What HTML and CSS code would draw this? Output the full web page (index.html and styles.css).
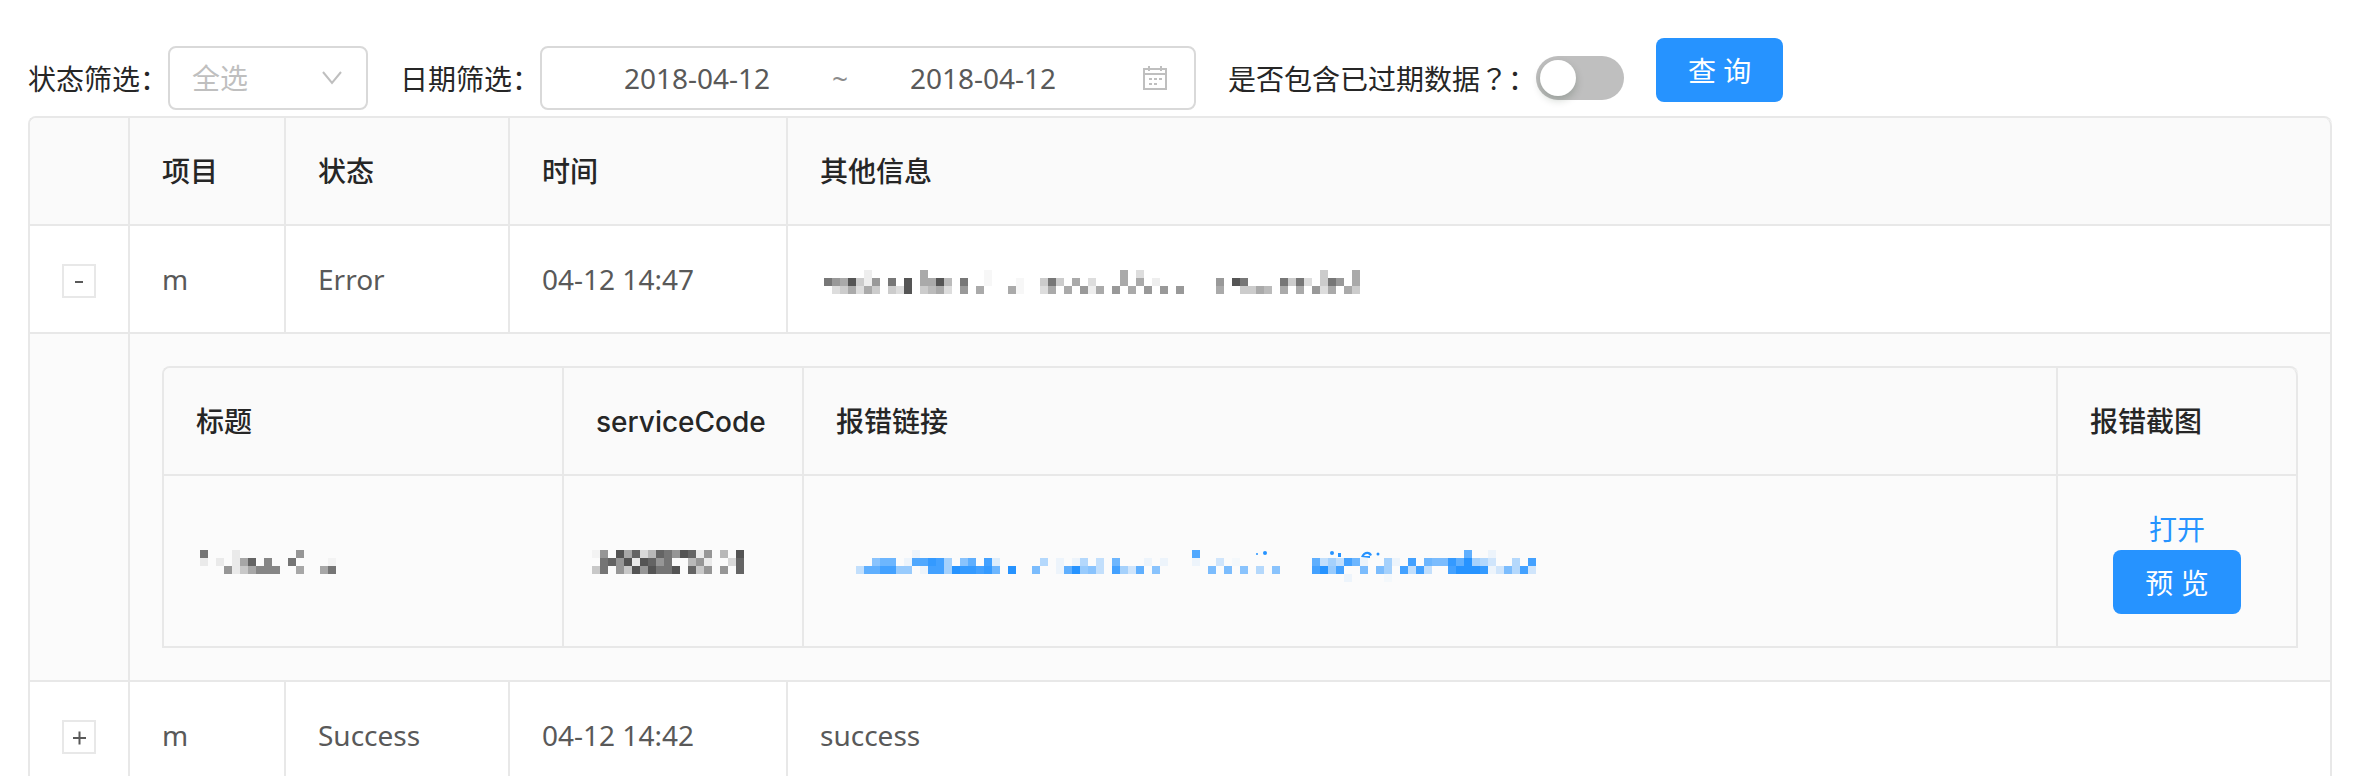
FILE: index.html
```html
<!DOCTYPE html>
<html lang="zh-CN">
<head>
<meta charset="utf-8">
<title>状态列表</title>
<link rel="stylesheet" href="styles.css">
</head>
<body>
<main class="page">
  <form class="filters">
    <div class="field">
      <label for="status">状态筛选：</label>
      <span class="select-box">
        <select id="status" class="select"><option>全选</option></select>
        <svg class="chevron" viewBox="0 0 20 14" aria-hidden="true"><path d="M1 1l9 11 9-11"/></svg>
      </span>
    </div>
    <div class="field">
      <label for="date-from">日期筛选：</label>
      <span class="range">
        <input id="date-from" class="range-input" type="text" value="2018-04-12">
        <span class="range-sep">~</span>
        <input class="range-input" type="text" value="2018-04-12" aria-label="结束日期">
        <svg class="calendar" viewBox="0 0 26 26" aria-hidden="true"><path d="M2 4h22v20H2zM2 9h22M7 1v5M19 1v5"/><path d="M7 14h3M12 14h3M17 14h3M7 19h3M12 19h3"/></svg>
      </span>
    </div>
    <div class="field">
      <label for="expired">是否包含已过期数据<span lang="zh-TW" class="centered-mark">？</span>：</label>
      <input id="expired" class="switch" type="checkbox" role="switch">
    </div>
    <button class="btn btn-query" type="button">查 询</button>
  </form>

  <table class="table">
    <colgroup><col class="c-icon"><col class="c-project"><col class="c-status"><col class="c-time"><col></colgroup>
    <thead>
      <tr><th></th><th>项目</th><th>状态</th><th>时间</th><th>其他信息</th></tr>
    </thead>
    <tbody>
      <tr>
        <td><button class="expand" type="button" aria-label="收起"><svg viewBox="0 0 30 30"><path d="M11 16h8"/></svg></button></td>
        <td>m</td><td>Error</td><td>04-12 14:47</td>
        <td><svg class="mosaic" data-x="4" data-y="12" data-rows="5:1 12:5 20:0 37:5 39:2 62:3 66:5|0:865a316 8:8 10:a 12:55a4 17:8 20:0 24:0 27:383 31:5 33:2 37:5 39:5 41:1 49:6 51:a8 57:8382 62:386 66:5|1:235253 8:32a 12:3452 17:6 19:5 23:50 27:25 30:5 32:615 36:6 38:5 40:6 42:6 44:6 49:5 52:3354 57:5 59:5 61:625 65:53"></svg></td>
      </tr>
      <tr class="detail">
        <td></td>
        <td colspan="4">
          <table class="table">
            <colgroup><col class="c-title"><col class="c-code"><col><col class="c-shot"></colgroup>
            <thead>
              <tr><th>标题</th><th>serviceCode</th><th>报错链接</th><th>报错截图</th></tr>
            </thead>
            <tbody>
              <tr>
                <td><svg class="mosaic" data-x="4" data-y="10" data-rows="0:8 4:1 12:6|0:1 2:1 4:159 8:7 11:8 16:0|3:6135777 12:5 15:58"></svg></td>
                <td><svg class="mosaic" data-x="-4" data-y="10" data-rows="0:06 3:a5924986a9 13:16 16:4 18:a|1:896a1a968 12:461 17:29|0:38 3:63a6a88a 12:936 16:6 18:9"></svg></td>
                <td><a class="report" href="#report" aria-label="报错链接"><svg class="mosaic" data-x="20" data-y="10" data-rows="7:1 42:c 76:b 79:1|2:8aa 6:1cced6 13:8b 16:d2 23:5 25:1 27:15 30:4 32:a 36:1 38:1 42:1 45:3 47:0 57:b464da1 66:61 69:d 71:a99ebf653 82:5 84:d|0:4bbdd77 8:1dd6feedea 19:f 22:9 25:1bf784 32:d63b 37:8 44:9 46:9 48:8 50:5 52:8 57:df7d 63:9 65:96 68:d4d4 74:dfffe139 82:5d3|61:1 66:0"><g transform="translate(20 10)"><circle cx="401" cy="4" r="1"/><circle cx="409" cy="3" r="2"/><circle cx="476" cy="3" r="2"/><path d="M482 3h3v4h-3z"/><circle cx="522" cy="4" r="1.500"/><path d="M505 7c2-6 9-7 11-2l-2 1c-2-3-5-2-6 0h6v2z"/></g></svg></a></td>
                <td class="actions"><a href="#open">打开</a><button class="btn" type="button">预 览</button></td>
              </tr>
            </tbody>
          </table>
        </td>
      </tr>
      <tr>
        <td><button class="expand" type="button" aria-label="展开"><svg viewBox="0 0 30 30"><path d="M9 16h13M15.500 9.500v13"/></svg></button></td>
        <td>m</td><td>Success</td><td>04-12 14:42</td><td>success</td>
      </tr>
    </tbody>
  </table>
</main>
<script src="mosaic.js"></script>
</body>
</html>
```

FILE: styles.css
```css
* { box-sizing: border-box; }

body {
  margin: 0;
  height: 100vh;
  overflow: hidden;
  background: #fff;
  color: #595959;
  font: 28px/42px "Noto Sans", "Noto Sans CJK SC", sans-serif;
}

button, input, select { font: inherit; color: inherit; margin: 0; }
a { color: #2693ff; text-decoration: none; }
svg { display: block; }

.page { padding: 38px 40px 0 28px; }

.filters {
  display: flex;
  align-items: flex-end;
  gap: 32px;
  height: 72px;
  margin-bottom: 6px;
  color: #262626;
}

.field { display: flex; align-items: center; height: 64px; white-space: nowrap; }
.field label { font-family: "Noto Sans CJK SC", sans-serif; }
.field .centered-mark { font-family: "Noto Sans CJK TC", sans-serif; }

.select-box { position: relative; }
.select {
  display: block;
  appearance: none;
  width: 200px;
  height: 64px;
  padding: 0 22px;
  border: 2px solid #d9d9d9;
  border-radius: 8px;
  background: #fff;
  color: #bfbfbf;
}
.chevron {
  position: absolute;
  right: 26px;
  top: 25px;
  width: 20px;
  height: 14px;
  fill: none;
  stroke: #bfbfbf;
  stroke-width: 2;
  pointer-events: none;
}

.range {
  display: flex;
  align-items: center;
  width: 656px;
  height: 64px;
  padding: 0 26px 0 22px;
  border: 2px solid #d9d9d9;
  border-radius: 8px;
  color: #595959;
}
.range-input {
  width: 266px;
  padding: 0;
  border: 0;
  outline: 0;
  background: none;
  text-align: center;
}
.range-sep { width: 20px; text-align: center; color: #8c8c8c; }
.calendar {
  width: 26px;
  height: 26px;
  margin-left: auto;
  fill: none;
  stroke: #bfbfbf;
  stroke-width: 2;
}

.switch {
  appearance: none;
  width: 88px;
  height: 44px;
  padding: 4px;
  border-radius: 22px;
  background: #bfbfbf;
}
.switch::before {
  content: "";
  display: block;
  width: 36px;
  height: 36px;
  border-radius: 50%;
  background: #fff;
  box-shadow: 0 4px 8px rgba(0, 35, 11, .2);
}

.btn {
  height: 64px;
  padding: 2px 32px 0;
  border: 0;
  border-radius: 8px;
  background: #2693ff;
  color: #fff;
}
.btn-query { align-self: flex-start; }

.table {
  width: 100%;
  table-layout: fixed;
  border-collapse: separate;
  border-spacing: 0;
  border: 2px solid #e8e8e8;
  border-width: 2px 0 0 2px;
  border-radius: 8px 8px 0 0;
}
.table th, .table td {
  padding: 32px;
  border: 2px solid #e8e8e8;
  border-width: 0 2px 2px 0;
  text-align: left;
  overflow-wrap: break-word;
}
.table th {
  padding: 33px 32px 31px;
  background: #fafafa;
  color: #262626;
  font-family: Inter, "Noto Sans CJK SC", sans-serif;
  font-weight: 500;
}
.table th:first-child { border-top-left-radius: 6px; }
.table th:last-child { border-top-right-radius: 8px; }

.c-icon { width: 100px; }
.c-project { width: 156px; }
.c-status { width: 224px; }
.c-time { width: 278px; }
.c-title { width: 400px; }
.c-code { width: 240px; }
.c-shot { width: 240px; }

.detail > td { background: #fbfbfb; }
.report { display: block; }
.table .actions { text-align: center; }
.actions a, .actions .btn { display: block; margin: 0 auto; }

.expand {
  display: block;
  width: 34px;
  height: 34px;
  margin-top: 4px;
  padding: 0;
  border: 2px solid #e8e8e8;
  background: #fff;
}
.expand svg { fill: none; stroke: #595959; stroke-width: 2; }

.mosaic { width: 100%; height: 42px; overflow: visible; fill: #000; }
a .mosaic { fill: #2693ff; }
```

FILE: mosaic.js
```js
// Draws masked text as 8px blocks. Each row lists runs "column:levels",
// where a level is one hex digit of opacity.
const CELL = 8;
document.querySelectorAll(".mosaic").forEach((svg) => {
  const left = Number(svg.dataset.x);
  const top = Number(svg.dataset.y);
  svg.dataset.rows.split("|").forEach((row, r) => {
    row.split(" ").forEach((run) => {
      const [start, levels] = run.split(":");
      [...levels].forEach((level, i) => {
        const rect = document.createElementNS("http://www.w3.org/2000/svg", "rect");
        rect.setAttribute("x", left + (Number(start) + i) * CELL);
        rect.setAttribute("y", top + r * CELL);
        rect.setAttribute("width", CELL);
        rect.setAttribute("height", CELL);
        rect.setAttribute("fill-opacity", parseInt(level, 16) / 15 || 0.03);
        svg.append(rect);
      });
    });
  });
});
```
